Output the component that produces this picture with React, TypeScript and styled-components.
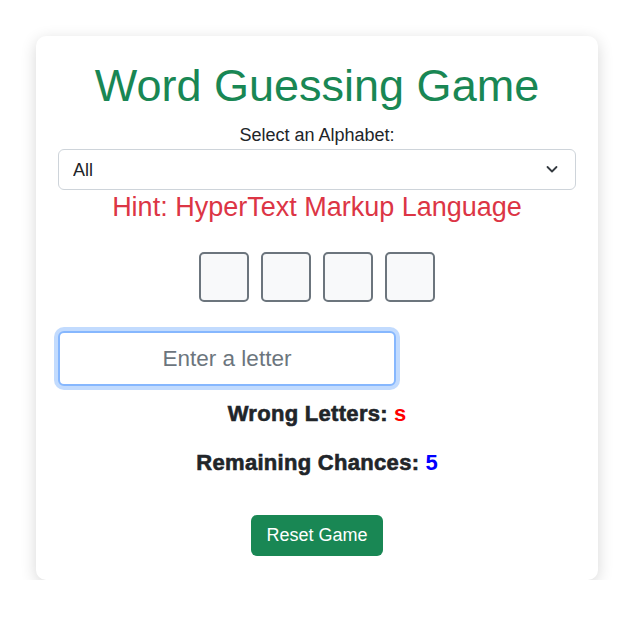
import { useState } from 'react';
import styled, { createGlobalStyle } from 'styled-components';

const GlobalStyle = createGlobalStyle`
  body {
    margin: 0;
    background: #ffffff;
    font-family: 'Liberation Sans', Arial, sans-serif;
    font-size: 18px;
    color: #212529;
  }
`;

function App() {
  const [alphabet, setAlphabet] = useState('All');
  const [letter, setLetter] = useState('');
  const slots = ['', '', '', ''];

  return (
    <Page>
      <GlobalStyle />
      <Card>
        <Title>Word Guessing Game</Title>
        <Label htmlFor="alphabet">Select an Alphabet:</Label>
        <SelectWrap>
          <Select
            id="alphabet"
            value={alphabet}
            onChange={(e) => setAlphabet(e.target.value)}
          >
            <option>All</option>
            <option>A</option>
            <option>B</option>
          </Select>
          <Chevron viewBox="0 0 16 16">
            <path
              d="M3.5 6l4.5 4.5L12.5 6"
              fill="none"
              stroke="#343a40"
              strokeWidth="1.8"
              strokeLinecap="round"
              strokeLinejoin="round"
            />
          </Chevron>
        </SelectWrap>
        <Hint>Hint: HyperText Markup Language</Hint>
        <Slots>
          {slots.map((s, i) => (
            <Slot key={i}>{s}</Slot>
          ))}
        </Slots>
        <InputRow>
          <LetterInput
            autoFocus
            placeholder="Enter a letter"
            value={letter}
            maxLength={1}
            onChange={(e) => setLetter(e.target.value)}
          />
        </InputRow>
        <Stat>
          <StatLabel>Wrong Letters:</StatLabel> <Value $color="#ff0000">s</Value>
        </Stat>
        <Stat>
          <StatLabel>Remaining Chances:</StatLabel>{' '}
          <Value $color="#0000ff">5</Value>
        </Stat>
        <ResetButton>Reset Game</ResetButton>
      </Card>
    </Page>
  );
}

const Page = styled.div`
  padding: 36px 43px 0 36px;
`;

const Card = styled.div`
  width: 562px;
  box-sizing: border-box;
  padding: 22px 22px 24px;
  background: #fff;
  border-radius: 10px;
  box-shadow: 0 4px 16px rgba(0, 0, 0, 0.16);
  display: flex;
  flex-direction: column;
  align-items: center;
`;

const Title = styled.h1`
  margin: 1px 0 11px;
  font-size: 45px;
  font-weight: 400;
  line-height: 54px;
  color: #198754;
`;

const Label = styled.label`
  font-size: 18px;
  line-height: 22px;
  margin-bottom: 3px;
`;

const SelectWrap = styled.div`
  position: relative;
  width: 100%;
`;

const Select = styled.select`
  appearance: none;
  width: 100%;
  height: 41px;
  box-sizing: border-box;
  padding: 0 36px 0 14px;
  border: 1px solid #ced4da;
  border-radius: 6px;
  background: #fff;
  font-family: 'Liberation Sans', Arial, sans-serif;
  font-size: 18px;
  color: #212529;
`;

const Chevron = styled.svg`
  position: absolute;
  right: 16px;
  top: 12px;
  width: 16px;
  height: 16px;
  pointer-events: none;
`;

const Hint = styled.p`
  margin: 1px 0 29px;
  font-size: 27px;
  line-height: 32px;
  color: #dc3545;
`;

const Slots = styled.div`
  display: flex;
  gap: 12px;
  margin-bottom: 29px;
`;

const Slot = styled.div`
  width: 50px;
  height: 50px;
  box-sizing: border-box;
  border: 2px solid #6c757d;
  border-radius: 5px;
  background: #f8f9fa;
`;

const InputRow = styled.div`
  width: 100%;
  display: flex;
`;

const LetterInput = styled.input`
  width: 338px;
  height: 55px;
  box-sizing: border-box;
  border: 2px solid #86b7fe;
  border-radius: 6px;
  outline: none;
  box-shadow: 0 0 0 4px rgba(13, 110, 253, 0.25);
  text-align: center;
  font-family: 'Liberation Sans', Arial, sans-serif;
  font-size: 22.5px;
  color: #212529;

  &::placeholder {
    color: #6c757d;
  }
`;

const Stat = styled.p`
  margin: 15px 0 0;
  font-size: 22px;
  line-height: 26px;
  color: #212529;

  & + & {
    margin-top: 23px;
  }
`;

const StatLabel = styled.strong`
  font-weight: 700;
  letter-spacing: 0.3px;
  -webkit-text-stroke: 0.6px #212529;
`;

const Value = styled.span<{ $color: string }>`
  font-weight: 700;
  color: ${({ $color }) => $color};
`;

const ResetButton = styled.button`
  margin-top: 39px;
  padding: 0 15px;
  height: 41px;
  border: none;
  border-radius: 6px;
  background: #198754;
  color: #fff;
  font-family: 'Liberation Sans', Arial, sans-serif;
  font-size: 18px;
  cursor: pointer;
`;

export default App;
